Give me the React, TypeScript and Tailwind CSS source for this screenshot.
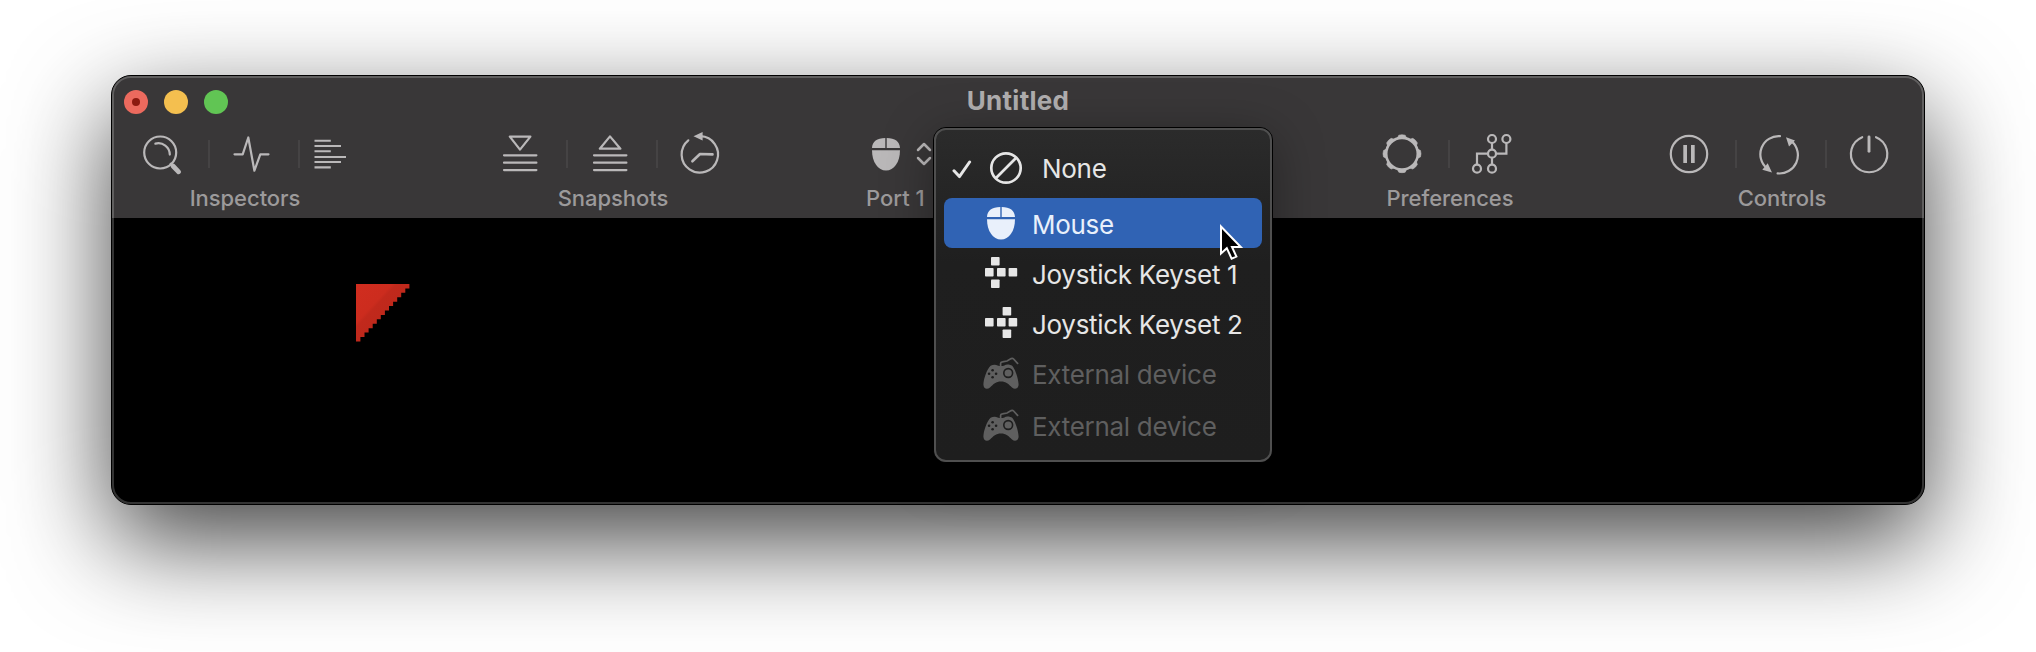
import { Fragment, type ReactNode } from "react";

function Icon({ children }: { children: ReactNode }) {
  return (
    <svg
      viewBox="0 0 40 44"
      className="h-11 w-10 shrink-0 overflow-visible"
      fill="none"
      stroke="currentColor"
      strokeWidth="2.2"
      strokeLinecap="round"
      strokeLinejoin="round"
    >
      {children}
    </svg>
  );
}

const Magnifier = () => (
  <Icon>
    <circle cx="18.2" cy="20.5" r="16" />
    <path d="M13.4 11.6A11.4 11.4 0 0 1 27.8 22.6" />
    <path d="M29 32L31 34" strokeWidth="3" />
    <path d="M31 34L36.6 39.8" strokeWidth="4.8" />
  </Icon>
);

const Pulse = () => (
  <Icon>
    <path d="M2.5 22.3H10.7L16.3 5.5L22.4 38.7L28.3 22.3H36.5" />
  </Icon>
);

const Lines = () => (
  <Icon>
    <path d="M-7.5 8.7H8.8M-7.5 14H19M-7.5 19.3H8.8M-7.5 25H24M-7.5 30H19M-7.5 35.4H8.8" strokeWidth="2.1" strokeLinecap="butt" />
  </Icon>
);

const Save = () => (
  <Icon>
    <path d="M9.8 4.6H30.4L20 17.6ZM4 23.3H36.4M4 30.7H36.4M4 38.1H36.4" />
  </Icon>
);

const Restore = () => (
  <Icon>
    <path d="M9.8 16.7H30.4L20 4.4ZM4 23.3H36.4M4 30.7H36.4M4 38.1H36.4" />
  </Icon>
);

const History = () => (
  <Icon>
    <path d="M8.3 8.3A18.2 18.2 0 1 0 20.5 4.2" />
    <path d="M13.5 4.3L22.6 0V8.6Z" fill="currentColor" stroke="none" />
    <path d="M32.5 22.4L20 22L12.4 29.3" strokeWidth="2.6" />
  </Icon>
);

const teeth = [0, 45, 90, 135, 180, 225, 270, 315];

const Gear = () => (
  <Icon>
    <circle cx="20" cy="21.7" r="15.8" strokeWidth="2.6" />
    {teeth.map((a) => (
      <path
        key={a}
        transform={`rotate(${a} 20 21.7)`}
        d="M15.4 6L16.8 3.2Q20 2.2 23.2 3.2L24.6 6Q20 4.8 15.4 6Z"
        fill="currentColor"
        strokeWidth="0.6"
      />
    ))}
  </Icon>
);

const Network = () => (
  <Icon>
    <circle cx="20" cy="7" r="4" />
    <circle cx="34.4" cy="7" r="4" />
    <circle cx="20" cy="21.7" r="4" />
    <circle cx="5" cy="36.7" r="4" />
    <circle cx="20" cy="36.7" r="4" />
    <path d="M20 11V17.7M20 25.7V32.7M24 21.7H34.4V11M16 21.7H5V32.7" strokeLinejoin="miter" strokeLinecap="butt" />
  </Icon>
);

const Pause = () => (
  <Icon>
    <circle cx="20" cy="22" r="18.2" />
    <path d="M14.3 13H18V31H14.3ZM22 13H25.7V31H22Z" fill="currentColor" stroke="none" />
  </Icon>
);

const Cycle = () => (
  <Icon>
    <path d="M21 4.2A18.2 18.2 0 0 0 8 36.4M18.6 41.4A18.4 18.4 0 0 0 33 9.6" />
    <path d="M13 40.4L3.3 37.8L8.7 31.3ZM27 5.2L36 8.5L30 14.4Z" fill="currentColor" stroke="none" />
  </Icon>
);

const Power = () => (
  <Icon>
    <path d="M13.2 5.2A18.2 18.2 0 1 0 27 5.2" />
    <path d="M20 5V19.3" strokeWidth="2.9" />
  </Icon>
);

function MouseIcon({ className }: { className: string }) {
  return (
    <svg viewBox="0 0 28 33" className={className} fill="currentColor">
      <path d="M13.3 0V9.9H0C0.3 3.5 5 0 13.3 0ZM14.7 0V9.9H28C27.7 3.5 23 0 14.7 0Z" />
      <path d="M0 12.2H28C28 24 22 32.6 14 32.6S0 24 0 12.2Z" />
    </svg>
  );
}

function KeysIcon({ flipped }: { flipped?: boolean }) {
  const x = flipped ? 17.6 : 6;
  return (
    <svg viewBox="0 0 32 32" className="size-8 overflow-visible" fill="currentColor">
      <rect x={x} y="0" width="8.6" height="8.6" rx="0.8" />
      <rect x="0" y="11" width="8.6" height="8.6" rx="0.8" />
      <rect x="12" y="11" width="8.6" height="8.6" rx="0.8" />
      <rect x="23.6" y="11" width="8.6" height="8.6" rx="0.8" />
      <rect x={x} y="22.4" width="8.6" height="8.6" rx="0.8" />
    </svg>
  );
}

function PadIcon() {
  return (
    <svg viewBox="0 0 36 33" className="h-[33px] w-9" fill="none">
      <path
        d="M7.6 8.8C9.6 7.6 12.6 7.2 14.6 8.4Q18 9.8 21.4 8.4C23.6 7 27.4 7.6 29.4 9C32.6 13 35.4 22 35.6 27.4C35.6 31.8 31.8 32.8 29 30.4C25.6 27 23 24.4 18 24.4S10.4 27 7 30.4C4.2 32.8.4 31.8.4 27.4C.6 22 4 12 7.6 8.8Z"
        fill="currentColor"
      />
      <path d="M17.6 8.8V6.6Q17.6 5 19.4 4.8L24 4L28.2 1.6Q29.6 1 30.6 2L34.6 6.4" stroke="currentColor" strokeWidth="1.7" strokeLinecap="round" />
      <circle cx="25.2" cy="16" r="4.4" stroke="#1e1e1e" strokeWidth="1.6" />
      <g fill="#1e1e1e">
        <circle cx="9.6" cy="13.2" r="1.3" />
        <circle cx="9.6" cy="20.2" r="1.3" />
        <circle cx="6.1" cy="16.7" r="1.3" />
        <circle cx="13.1" cy="16.7" r="1.3" />
      </g>
    </svg>
  );
}

function Group({
  icons,
  label,
  className,
  labelClass,
  rowClass = "",
}: {
  icons: ReactNode[];
  label: string;
  className: string;
  labelClass: string;
  rowClass?: string;
}) {
  return (
    <div className={`flex flex-col items-center ${className}`}>
      <div className={`flex items-center text-[#bab8b9] ${rowClass}`}>
        {icons.map((icon, i) => (
          <Fragment key={i}>
            {i > 0 && <div className="mr-[22px] ml-[26px] h-7 w-0.5 bg-[#454344] first:ml-0" />}
            {icon}
          </Fragment>
        ))}
      </div>
      <div className={`mt-2 text-[22px] leading-7 font-medium tracking-[-0.05px] whitespace-nowrap text-[#9c9a9b] ${labelClass}`}>{label}</div>
    </div>
  );
}

function Item({ icon, label, className, textClass = "pt-1" }: { icon: ReactNode; label: string; className: string; textClass?: string }) {
  return (
    <div className={`flex items-center rounded-[8px] pl-[35px] ${className}`}>
      <div className="flex w-11 justify-center">{icon}</div>
      <span className={`ml-[9px] text-[26px] leading-8 tracking-[-0.3px] whitespace-nowrap ${textClass}`}>{label}</span>
    </div>
  );
}

function PortMenu() {
  return (
    <div className="absolute top-[-5px] left-[66px] z-10 h-[336px] w-[340px] rounded-[13px] border border-black bg-[#1e1e1e] shadow-[0_10px_50px_rgba(0,0,0,0.35)]">
      <div className="h-full rounded-[12px] border-2 border-[#4f4f4f] bg-linear-to-b from-[#2b2b2b] via-[#1f1f1f] via-40% to-[#1e1e1e] px-2 pt-[10px] text-[#e6e6e6]">
        <div className="flex h-[58px] items-center">
          <svg viewBox="0 0 20 20" className="mt-px ml-[8px] size-5" fill="none" stroke="currentColor" strokeWidth="3" strokeLinecap="round" strokeLinejoin="round">
            <path d="M2 10.8L7.4 16.6L17.6 2" />
          </svg>
          <svg viewBox="0 0 34 34" className="-mt-0.5 ml-[17px] size-[34px]" fill="none" stroke="currentColor" strokeWidth="2.7">
            <circle cx="17" cy="17" r="14.7" />
            <path d="M6.8 27.2L27.2 6.8" />
          </svg>
          <span className="ml-[19px] text-[26px] leading-8 tracking-[-0.3px]">None</span>
        </div>
        <Item className="h-[50px] bg-[#3063b4] text-[#e9f0fb]" icon={<MouseIcon className="h-[33px] w-7" />} label="Mouse" />
        <Item className="h-[50px]" icon={<KeysIcon />} label="Joystick Keyset 1" />
        <Item className="h-[50px]" icon={<KeysIcon flipped />} label="Joystick Keyset 2" />
        <Item className="h-[52px] text-[#5f5f5f]" textClass="pt-0.5" icon={<div className="-mt-0.5"><PadIcon /></div>} label="External device" />
        <Item className="h-[52px] text-[#5f5f5f]" textClass="pt-0.5" icon={<div className="-mt-0.5"><PadIcon /></div>} label="External device" />
      </div>
      <svg viewBox="0 0 26 40" className="absolute top-[95px] left-[285px] h-10 w-[26px]" fill="#000" stroke="#fff" strokeWidth="2">
        <path d="M2 3.5V30.5L7.8 25.2L12.6 35.6L17.4 33.6L13 24H21.8Z" />
      </svg>
    </div>
  );
}

// Staircase edge of the emulated sprite
const steps = Array.from({ length: 13 }, (_, i) => `H${(53.4 - i * 4.08).toFixed(1)}v4.42`).join("");

export default function App() {
  return (
    <div className="h-[652px] w-[2036px] overflow-hidden bg-white pt-[75px] pl-[111px] font-['Inter',sans-serif]">
      <div className="relative flex h-[430px] w-[1814px] flex-col rounded-[20px] border border-black bg-black shadow-[0_36px_100px_rgba(0,0,0,0.74)]">
        <header className="h-[142px] shrink-0 rounded-t-[19px] bg-[#393738]">
          <div className="flex h-[56px] items-start">
            <div className="flex w-[300px] gap-4 pt-[14px] pl-3">
              <span className="flex size-6 items-center justify-center rounded-full bg-[#ec6a5e]">
                <span className="size-2 rounded-full bg-[#8c1a10]" />
              </span>
              <span className="size-6 rounded-full bg-[#f4bf4f]" />
              <span className="size-6 rounded-full bg-[#61c554]" />
            </div>
            <h1 className="mr-[300px] flex-1 pt-[9px] text-center text-[26px] leading-8 font-bold tracking-[0.25px] text-[#b0aeaf]">Untitled</h1>
          </div>
          <div className="flex">
            <Group className="ml-[30px] w-[220px]" labelClass="pr-3.5" label="Inspectors" icons={[<Magnifier />, <Pulse />, <Lines />]} />
            <Group className="ml-[138px] w-[220px]" labelClass="pl-1.5" label="Snapshots" icons={[<Save />, <Restore />, <History />]} />
            <div className="relative ml-[147px] w-[66px] text-[#bab8b9]">
              <div className="flex h-11 items-center pl-[5px]">
                <MouseIcon className="h-[33px] w-7" />
                <svg viewBox="0 0 16 24" className="ml-[16px] h-6 w-4" fill="none" stroke="currentColor" strokeWidth="2.5" strokeLinecap="round" strokeLinejoin="round">
                  <path d="M2 8L8 2L14 8M2 16L8 22L14 16" />
                </svg>
              </div>
              <div className="-ml-px mt-2 text-[22px] leading-7 font-medium whitespace-nowrap text-[#9c9a9b]">Port 1</div>
              <PortMenu />
            </div>
            <Group className="ml-[449px] w-[130px]" labelClass="pl-1.5" label="Preferences" icons={[<Gear />, <Network />]} />
            <Group className="ml-[157px] w-[220px]" labelClass="pl-1.5" label="Controls" icons={[<Pause />, <Cycle />, <Power />]} />
          </div>
        </header>
        <main className="flex-1 pt-[66px] pl-[244px]">
          <svg viewBox="0 0 54 58" className="h-[58px] w-[54px]">
            <defs>
              <linearGradient id="sprite" x1="0" y1="0" x2="1" y2="1">
                <stop offset="0" stopColor="#d12d1f" />
                <stop offset="0.34" stopColor="#cc2c1e" />
                <stop offset="0.38" stopColor="#c1291c" />
                <stop offset="1" stopColor="#b82619" />
              </linearGradient>
            </defs>
            <path d={`M0 0${steps}H0Z`} fill="url(#sprite)" />
          </svg>
        </main>
        <div className="pointer-events-none absolute inset-0 rounded-[19px] border-2 border-white/20" />
      </div>
    </div>
  );
}
